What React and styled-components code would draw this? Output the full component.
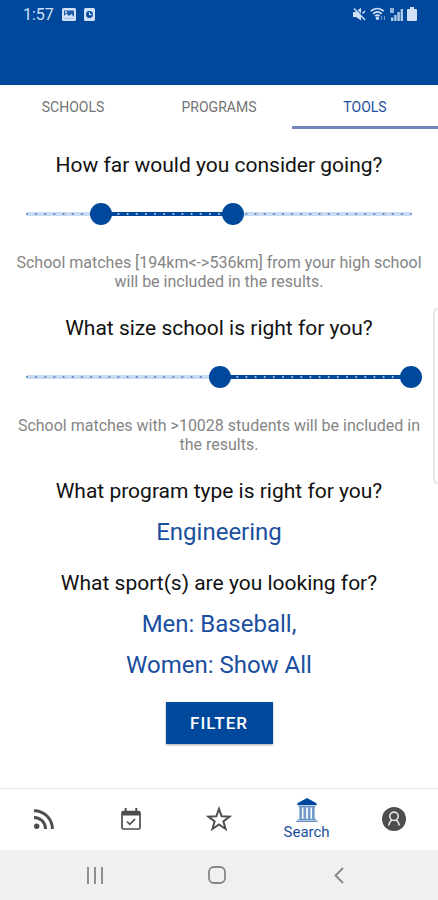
import React, { useState } from "react";
import styled, { createGlobalStyle } from "styled-components";

const BLUE = "#00489c";
const TEXT_BLUE = "#1a4f9f";
const TICKS = 42;

const GlobalStyle = createGlobalStyle`
  * {
    box-sizing: border-box;
  }

  body {
    margin: 0;
    background: #fff;
    font-family: Roboto, "Liberation Sans", sans-serif;
  }
`;

const PlainButton = styled.button`
  border: 0;
  padding: 0;
  background: none;
  font-family: inherit;
  cursor: pointer;
`;

const Screen = styled.div`
  position: relative;
  display: flex;
  flex-direction: column;
  min-height: 100vh;
`;

const Header = styled.header`
  height: 85px;
  background: ${BLUE};
`;

const StatusBar = styled.div`
  display: flex;
  align-items: center;
  justify-content: space-between;
  height: 28px;
  padding: 0 21px 0 23px;
  color: #cfe0f8;
  font-size: 16px;
`;

const StatusGroup = styled.div`
  display: flex;
  align-items: center;
  gap: ${(props) => props.$gap}px;
`;

const Tabs = styled.nav`
  display: grid;
  grid-template-columns: repeat(3, 1fr);
  height: 44px;
`;

const Tab = styled(PlainButton)`
  padding-top: 3px;
  font-size: 14px;
  color: ${(props) => (props.$active ? TEXT_BLUE : "#737373")};
  border-bottom: 3px solid ${(props) => (props.$active ? "#7385b8" : "transparent")};
`;

const Main = styled.main`
  flex: 1;
  display: flex;
  flex-direction: column;
  gap: 23px;
  padding: 22px 0;
`;

const Section = styled.section`
  display: flex;
  flex-direction: column;
  align-items: center;
  gap: 13px;
`;

const Question = styled.h2`
  margin: 0;
  font-size: 21px;
  line-height: 28px;
  font-weight: 400;
  color: #111;
  text-align: center;
`;

const Hint = styled.p`
  margin: 0;
  padding: 10px 8px 0;
  font-size: 16px;
  line-height: 19px;
  color: #858585;
  text-align: center;
`;

const Choice = styled(PlainButton)`
  font-size: 24px;
  line-height: 28px;
  color: ${TEXT_BLUE};
`;

const FilterButton = styled(PlainButton)`
  align-self: center;
  width: 107px;
  height: 42px;
  font-size: 17px;
  font-weight: 500;
  letter-spacing: 1px;
  color: #fff;
  background: ${BLUE};
  box-shadow: 0 1px 2px rgba(0, 0, 0, 0.35);
`;

const SliderBox = styled.div`
  display: grid;
  align-items: center;
  align-self: stretch;
  height: 32px;
  margin: 6px 16px 0;

  > * {
    grid-area: 1 / 1;
  }
`;

const Track = styled.svg`
  height: 6px;
  width: calc(100% - 22px);
  margin: 0 11px;
  overflow: visible;
`;

const Thumb = styled.input`
  appearance: none;
  width: 100%;
  height: 22px;
  margin: 0;
  background: none;
  pointer-events: none;

  &::-webkit-slider-thumb {
    appearance: none;
    width: 22px;
    height: 22px;
    border-radius: 50%;
    background: ${BLUE};
    pointer-events: auto;
    cursor: pointer;
  }
`;

const BottomNav = styled.nav`
  display: grid;
  grid-template-columns: repeat(5, 1fr);
  height: 62px;
  padding-bottom: 1px;
  border-top: 1px solid #ececec;
`;

const NavItem = styled(PlainButton)`
  display: flex;
  flex-direction: column;
  align-items: center;
  justify-content: center;
  gap: 1px;
  font-size: 15px;
  line-height: 18px;
  color: ${(props) => (props.$active ? TEXT_BLUE : "#4d4d4d")};
`;

const SystemBar = styled.div`
  display: flex;
  align-items: center;
  justify-content: center;
  gap: 98px;
  height: 50px;
  padding-right: 4px;
  background: #f0f0f0;
`;

const SystemButton = styled(PlainButton)`
  display: flex;
  justify-content: center;
  width: 24px;
`;

const EdgeHandle = styled.div`
  position: absolute;
  top: 308px;
  right: 0;
  width: 5px;
  height: 176px;
  border: 2px solid #e9e9e9;
  border-right: 0;
  border-radius: 6px 0 0 6px;
`;

function RangeSlider({ label, max, value, onChange }) {
  const [low, high] = value;
  const lowPct = (low / max) * 100;
  const highPct = (high / max) * 100;

  return (
    <SliderBox>
      <Track aria-hidden="true">
        <rect width="100%" y="1" height="4" fill="#c9dbf3" />
        <rect x={`${lowPct}%`} width={`${highPct - lowPct}%`} y="1" height="4" fill={BLUE} />
        {Array.from({ length: TICKS + 1 }, (_, i) => {
          const pct = (i / TICKS) * 100;
          const inside = pct > lowPct && pct < highPct;
          return <circle key={i} cx={`${pct}%`} cy="3" r="1.1" fill={inside ? "#a9c4ea" : "#5c86c2"} />;
        })}
      </Track>
      <Thumb
        type="range"
        aria-label={`${label} minimum`}
        max={max}
        value={low}
        onChange={(e) => onChange([Math.min(+e.target.value, high), high])}
      />
      <Thumb
        type="range"
        aria-label={`${label} maximum`}
        max={max}
        value={high}
        onChange={(e) => onChange([low, Math.max(+e.target.value, low)])}
      />
    </SliderBox>
  );
}

const PictureIcon = () => (
  <svg width="14" height="13" viewBox="0 0 14 13">
    <rect width="14" height="13" rx="1.5" fill="currentColor" />
    <path d="M2 10.5V2.500h10v8z" fill={BLUE} opacity="0.85" />
    <path d="M2 10.500V8l2.500-2.500L7 8l2.500-2L12 9v1.500z" fill="currentColor" />
    <circle cx="4" cy="4.200" r="1" fill="currentColor" />
  </svg>
);

const ClockIcon = () => (
  <svg width="11" height="13" viewBox="0 0 11 13">
    <rect width="11" height="13" rx="1.5" fill="currentColor" />
    <circle cx="5.500" cy="6.500" r="3.400" fill={BLUE} />
    <path d="M5.500 4.200v2.500h2.200" fill="none" stroke="currentColor" strokeWidth="1.200" />
  </svg>
);

const MuteIcon = () => (
  <svg width="13" height="14" viewBox="0 0 13 14" fill="currentColor">
    <path d="M0 5v5h3l5 3.500V9.200L3.200 4.200 2.400 5zM8 .8 4.600 3.200 8 6.600z" />
    <path d="m1 1.500 11 11.500M9.500 6.500l2.500-2.500" stroke="currentColor" strokeWidth="1.500" />
  </svg>
);

const WifiIcon = () => (
  <svg width="16" height="14" viewBox="0 0 16 14" fill="none" stroke="currentColor" strokeWidth="1.700">
    <path d="M.8 4.200c4-3.600 9-3.600 13 0M3 6.800c2.700-2.400 6.100-2.400 8.800 0M5.200 9.200c1.300-1.200 3.100-1.200 4.400 0" />
    <circle cx="7.400" cy="11.200" r=".9" fill="currentColor" />
    <path d="M11.500 9v4M14.500 9v4" strokeWidth="1.200" opacity="0.5" />
  </svg>
);

const SignalIcon = () => (
  <svg width="13" height="13" viewBox="0 0 13 13" fill="currentColor">
    <path d="M0 0h4v5H0z" opacity="0.7" />
    <path d="M1 9.500h2.400V13H1zM4.200 7h2.400v6H4.200zM7.400 4h2.400v9H7.400zM10.600 1H13v12h-2.400z" opacity="0.85" />
  </svg>
);

const BatteryIcon = () => (
  <svg width="10" height="14" viewBox="0 0 10 14" fill="currentColor">
    <path d="M3 0h4v2h2q1 0 1 1v10q0 1-1 1H1q-1 0-1-1V3q0-1 1-1h2z" />
  </svg>
);

const FeedIcon = () => (
  <svg width="20" height="20" viewBox="0 0 20 20" fill="none" stroke="currentColor" strokeWidth="3">
    <circle cx="2.700" cy="17.200" r="2.700" fill="currentColor" stroke="none" />
    <path d="M0 8.400A11.400 11.400 0 0 1 11.500 20M0 1.700A18.300 18.300 0 0 1 18.400 20" />
  </svg>
);

const CalendarIcon = () => (
  <svg width="20" height="22" viewBox="0 0 20 22" fill="none" stroke="currentColor">
    <rect x="1" y="3.500" width="18" height="17.500" rx="1.500" strokeWidth="1.700" />
    <path d="M1 3h18v4.500H1z" fill="currentColor" stroke="none" />
    <path d="M4.700 0v4M15.300 0v4" strokeWidth="2" />
    <path d="m6 13.500 2.800 2.800 5.200-5.200" strokeWidth="1.700" />
  </svg>
);

const StarIcon = () => (
  <svg width="26" height="26" viewBox="0 0 24 24" fill="none" stroke="currentColor" strokeWidth="1.800">
    <path d="m12 2.600 2.400 6.800 7.400.3-5.800 4.500 2.100 7L12 17.100l-6.100 4.100 2.100-7-5.800-4.500 7.400-.3z" />
  </svg>
);

const InstitutionIcon = () => (
  <svg width="22" height="24" viewBox="0 0 22 25" fill={BLUE}>
    <path d="M11 0 21 5.500v2H1v-2z" />
    <path d="M2.500 8.300h17V10h-17zM2 21.500h18V23H2zM0 23.400h22V25H0z" opacity="0.6" />
    <path d="M3 10h2.800v11.500H3zM7.300 10h2.800v11.500H7.300zM11.900 10h2.800v11.500h-2.800zM16.200 10H19v11.500h-2.800z" opacity="0.55" />
  </svg>
);

const ProfileIcon = () => (
  <svg width="24" height="24" viewBox="0 0 24 24">
    <circle cx="12" cy="12" r="12" fill="currentColor" />
    <g fill="none" stroke="#e4e4e4" strokeWidth="1.600">
      <circle cx="12" cy="9.300" r="4.200" />
      <path d="M6.800 18.500c.3-3 1.500-4.600 3.500-5.600M17.200 18.500c-.3-3-1.500-4.600-3.500-5.600" />
    </g>
  </svg>
);

const navItems = [
  { name: "Feed", icon: <FeedIcon /> },
  { name: "Calendar", icon: <CalendarIcon /> },
  { name: "Favourites", icon: <StarIcon /> },
  { name: "Search", icon: <InstitutionIcon />, active: true },
  { name: "Profile", icon: <ProfileIcon /> },
];

export default function App() {
  const [tab, setTab] = useState("TOOLS");
  const [distance, setDistance] = useState([194, 536]);
  const [size, setSize] = useState([10028, 20000]);

  return (
    <Screen>
      <GlobalStyle />
      <Header>
        <StatusBar>
          <StatusGroup $gap={8}>
            <span>1:57</span>
            <PictureIcon />
            <ClockIcon />
          </StatusGroup>
          <StatusGroup $gap={4}>
            <MuteIcon />
            <WifiIcon />
            <SignalIcon />
            <BatteryIcon />
          </StatusGroup>
        </StatusBar>
      </Header>
      <Tabs>
        {["SCHOOLS", "PROGRAMS", "TOOLS"].map((name) => (
          <Tab key={name} $active={tab === name} onClick={() => setTab(name)}>
            {name}
          </Tab>
        ))}
      </Tabs>
      <Main>
        <Section>
          <Question>How far would you consider going?</Question>
          <RangeSlider label="Distance" max={1000} value={distance} onChange={setDistance} />
          <Hint>
            {`School matches [${distance[0]}km<->${distance[1]}km] from your high school will be included in the results.`}
          </Hint>
        </Section>
        <Section>
          <Question>What size school is right for you?</Question>
          <RangeSlider label="School size" max={20000} value={size} onChange={setSize} />
          <Hint>{`School matches with >${size[0]} students will be included in the results.`}</Hint>
        </Section>
        <Section>
          <Question>What program type is right for you?</Question>
          <Choice>Engineering</Choice>
        </Section>
        <Section>
          <Question>What sport(s) are you looking for?</Question>
          <Choice>Men: Baseball,</Choice>
          <Choice>Women: Show All</Choice>
        </Section>
        <FilterButton>FILTER</FilterButton>
      </Main>
      <BottomNav>
        {navItems.map((item) => (
          <NavItem key={item.name} $active={item.active} aria-label={item.name}>
            {item.icon}
            {item.active && item.name}
          </NavItem>
        ))}
      </BottomNav>
      <SystemBar>
        <SystemButton aria-label="Recent apps">
          <svg width="16" height="17" viewBox="0 0 16 17" stroke="#858585" strokeWidth="1.800">
            <path d="M1 0v17M8 0v17M15 0v17" />
          </svg>
        </SystemButton>
        <SystemButton aria-label="Home">
          <svg width="18" height="18" viewBox="0 0 18 18" fill="none" stroke="#858585" strokeWidth="1.800">
            <rect x="1" y="1" width="16" height="16" rx="5" />
          </svg>
        </SystemButton>
        <SystemButton aria-label="Back">
          <svg width="10" height="17" viewBox="0 0 10 17" fill="none" stroke="#858585" strokeWidth="1.800">
            <path d="M9 1 1.500 8.500 9 16" />
          </svg>
        </SystemButton>
      </SystemBar>
      <EdgeHandle />
    </Screen>
  );
}
